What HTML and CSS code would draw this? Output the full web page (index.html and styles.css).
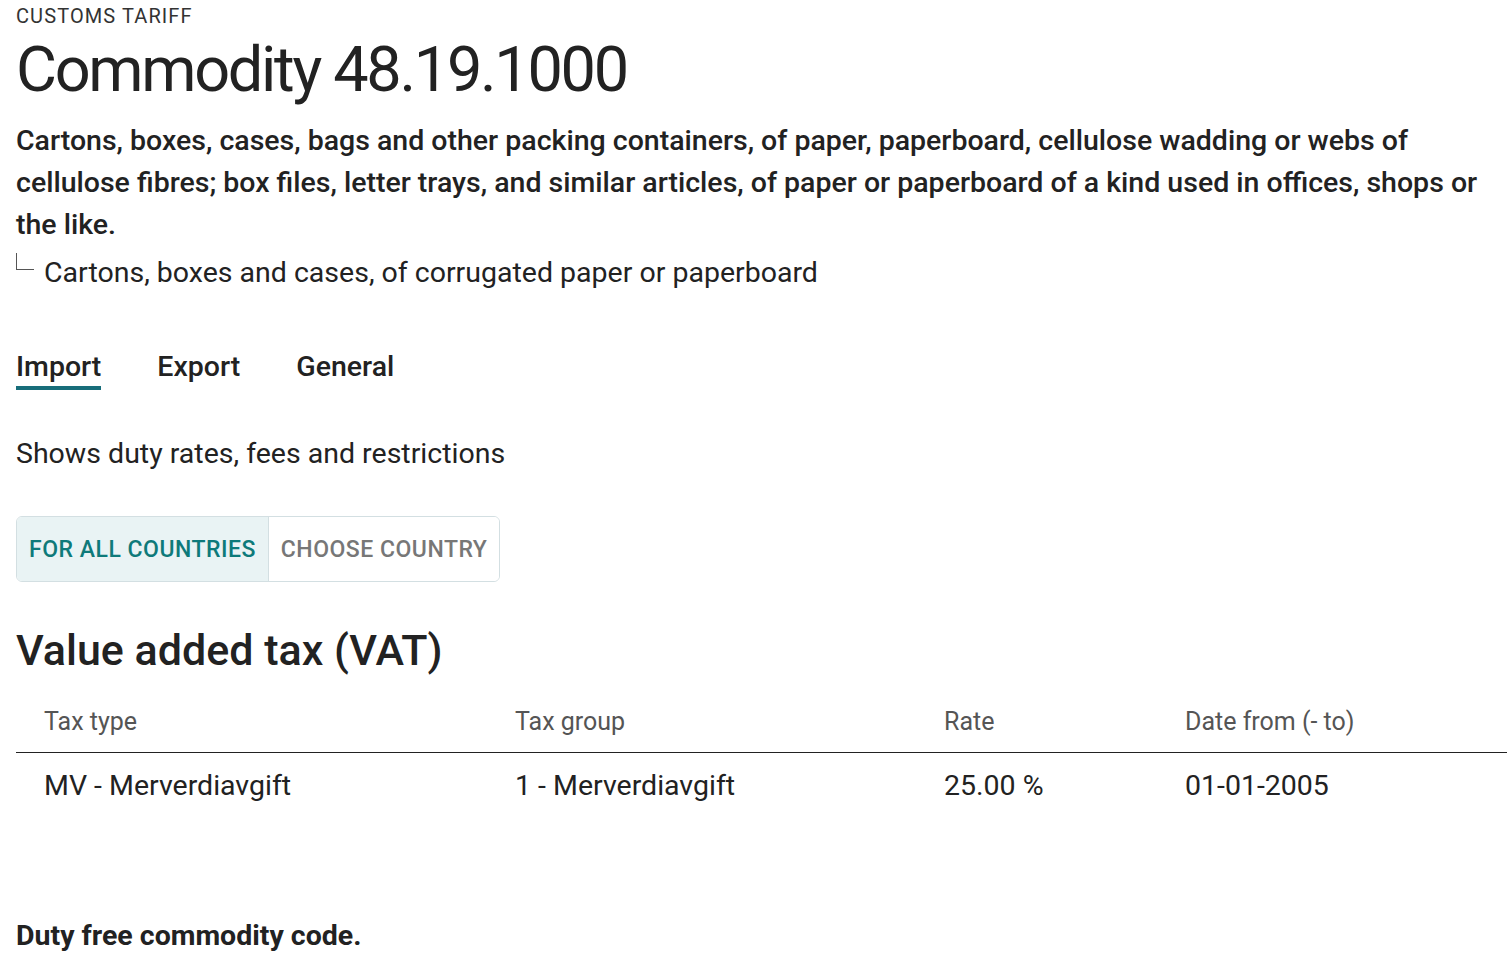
FILE: index.html
```html
<!DOCTYPE html>
<html lang="en">
<head>
  <meta charset="UTF-8" />
  <title>Commodity 48.19.1000</title>
  <link rel="stylesheet" href="styles.css">
</head>
<body>

  <div class="page">
    <div class="kicker">CUSTOMS TARIFF</div>
    <h1>Commodity 48.19.1000</h1>
    <p class="description">Cartons, boxes, cases, bags and other packing containers, of paper, paperboard, cellulose wadding or webs of cellulose fibres; box files, letter trays, and similar articles, of paper or paperboard of a kind used in offices, shops or the like.</p>
    <div class="sub-item">
      <span class="branch"></span>
      <span>Cartons, boxes and cases, of corrugated paper or paperboard</span>
    </div>

    <nav class="tabs">
      <button class="tab active">Import</button>
      <button class="tab">Export</button>
      <button class="tab">General</button>
    </nav>

    <p class="lead">Shows duty rates, fees and restrictions</p>

    <div class="toggle-group">
      <button class="toggle selected">FOR ALL COUNTRIES</button>
      <button class="toggle">CHOOSE COUNTRY</button>
    </div>

    <h2>Value added tax (VAT)</h2>
    <table class="rates">
      <thead>
        <tr>
          <th class="col-type">Tax type</th>
          <th class="col-group">Tax group</th>
          <th class="col-rate">Rate</th>
          <th>Date from (- to)</th>
        </tr>
      </thead>
      <tbody>
        <tr>
          <td>MV - Merverdiavgift</td>
          <td>1 - Merverdiavgift</td>
          <td>25.00 %</td>
          <td>01-01-2005</td>
        </tr>
      </tbody>
    </table>

    <p class="note">Duty free commodity code.</p>
  </div>

</body>
</html>
```

FILE: styles.css
```css
:root {
  --text: #222;
  --muted: #555;
  --teal: #176d7a;
  --teal-text: #0e7a7a;
  --border: #d3dfe2;
}

body {
  font-family: Roboto, 'Noto Sans', sans-serif;
  color: var(--text);
  background: #fff;
  margin: 0;
  padding: 0;
}

.page {
  padding: 0 0 0 16px;
}

.kicker {
  font-size: 20px;
  line-height: 24px;
  letter-spacing: 1.1px;
  padding-top: 4px;
  color: #333;
}

h1 {
  font-size: 63px;
  font-weight: 400;
  line-height: 84px;
  letter-spacing: -2.3px;
  margin: 0;
}

.description {
  font-size: 28.5px;
  font-weight: 500;
  line-height: 42px;
  margin: 8px 0 0;
}

.sub-item {
  display: flex;
  align-items: flex-start;
  font-size: 28.5px;
  line-height: 42px;
  margin-top: 6px;
}

.branch {
  width: 17px;
  height: 16px;
  margin: 1px 10px 0 0;
  border-left: 1px solid #555;
  border-bottom: 1px solid #555;
}

.tabs {
  display: flex;
  gap: 56px;
  margin-top: 56px;
}

.tab {
  font-family: inherit;
  font-size: 28.5px;
  font-weight: 500;
  line-height: 34px;
  color: var(--text);
  background: none;
  border: none;
  padding: 0 0 2px;
  border-bottom: 4px solid transparent;
  cursor: pointer;
}

.tab.active {
  border-bottom-color: var(--teal);
}

.lead {
  font-size: 28.5px;
  line-height: 40px;
  margin: 44px 0 0;
}

.toggle-group {
  display: inline-flex;
  margin-top: 42px;
  border: 1px solid var(--border);
  border-radius: 6px;
  overflow: hidden;
}

.toggle {
  font-family: inherit;
  font-size: 23px;
  font-weight: 500;
  letter-spacing: 0.5px;
  height: 64px;
  padding: 0 12px;
  border: none;
  background: #fff;
  color: #777;
  cursor: pointer;
}

.toggle.selected {
  background: #e9f3f4;
  color: var(--teal-text);
  border-right: 1px solid var(--border);
}

h2 {
  font-size: 43px;
  font-weight: 500;
  line-height: 56px;
  margin: 40px 0 0;
}

.rates {
  width: 100%;
  border-collapse: collapse;
  margin-top: 19px;
}

.rates th {
  text-align: left;
  font-weight: 400;
  font-size: 25px;
  line-height: 30px;
  color: var(--muted);
  padding: 10px 28px 15px;
  border-bottom: 1.5px solid #222;
}

.rates td {
  font-size: 28.5px;
  line-height: 34px;
  padding: 16px 28px 14px;
}

.col-type { width: 415px; }
.col-group { width: 373px; }
.col-rate { width: 185px; }

.note {
  font-size: 28.5px;
  font-weight: 700;
  line-height: 34px;
  margin: 102px 0 0;
}
```
